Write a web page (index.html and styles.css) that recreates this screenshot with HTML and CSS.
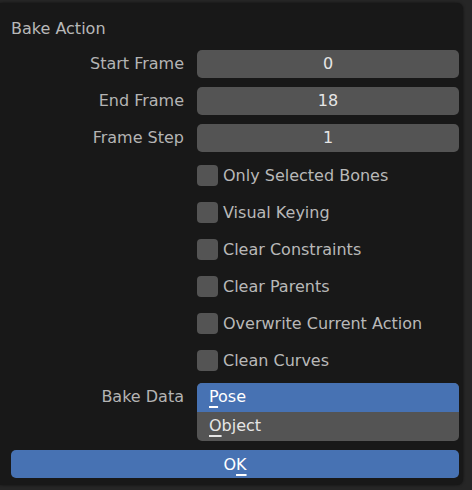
FILE: index.html
```html
<!DOCTYPE html>
<html lang="en">
<head>
    <meta charset="UTF-8">
    <title>Bake Action</title>
    <link rel="stylesheet" href="styles.css">
</head>
<body>
    <div class="popup">
        <div class="title">Bake Action</div>

        <div class="props">
            <div class="label">Start Frame</div>
            <div class="field">0</div>

            <div class="label">End Frame</div>
            <div class="field">18</div>

            <div class="label">Frame Step</div>
            <div class="field">1</div>

            <div></div>
            <label class="check"><span class="box"></span>Only Selected Bones</label>

            <div></div>
            <label class="check"><span class="box"></span>Visual Keying</label>

            <div></div>
            <label class="check"><span class="box"></span>Clear Constraints</label>

            <div></div>
            <label class="check"><span class="box"></span>Clear Parents</label>

            <div></div>
            <label class="check"><span class="box"></span>Overwrite Current Action</label>

            <div></div>
            <label class="check"><span class="box"></span>Clean Curves</label>

            <div class="label">Bake Data</div>
            <div class="enum">
                <div class="option active"><u>P</u>ose</div>
                <div class="option"><u>O</u>bject</div>
            </div>
        </div>

        <button class="ok">O<u>K</u></button>
    </div>
</body>
</html>
```

FILE: styles.css
```css
body {
    margin: 0;
    padding: 3px 9px 5px 0;
    background: #262626;
    font-family: "DejaVu Sans", sans-serif;
    font-size: 16px;
}
.popup {
    width: 463px;
    height: 482px;
    box-sizing: border-box;
    padding: 16px 4px 7px 11px;
    background: #181818;
    border-radius: 0 6px 6px 0;
    box-shadow: 0 0 3px rgba(0,0,0,0.6);
}
.title {
    color: #b8b8b8;
    line-height: 20px;
    height: 31px;
}
.props {
    display: grid;
    grid-template-columns: 173px 1fr;
    grid-template-rows: repeat(9, 28px) 58px;
    column-gap: 13px;
    row-gap: 9px;
}
.label {
    color: #b4b4b4;
    text-align: right;
    line-height: 28px;
}
.field {
    background: #545454;
    color: #e6e6e6;
    border-radius: 5px;
    text-align: center;
    line-height: 28px;
}
.check {
    display: flex;
    align-items: center;
    gap: 5px;
    color: #b8b8b8;
}
.box {
    width: 21px;
    height: 21px;
    background: #545454;
    border-radius: 4px;
}
.enum {
    border-radius: 5px;
    overflow: hidden;
    background: #545454;
}
.option {
    height: 29px;
    line-height: 28px;
    padding-left: 12px;
    color: #e6e6e6;
}
.option.active {
    background: #4772b3;
    color: #ffffff;
}
u {
    text-decoration-thickness: 2px;
    text-underline-offset: 4px;
}
.ok {
    display: block;
    width: 100%;
    height: 28px;
    margin-top: 9px;
    border: none;
    border-radius: 5px;
    background: #4772b3;
    color: #ffffff;
    font-family: inherit;
    font-size: 16px;
    padding: 0;
}
```
